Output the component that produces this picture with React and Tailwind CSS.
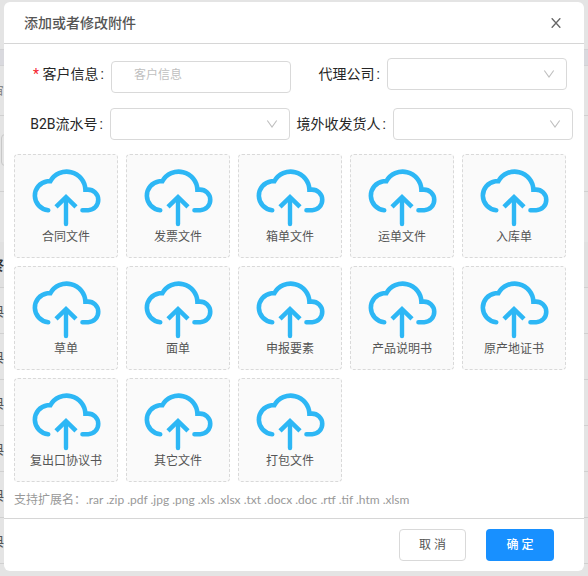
import { useId } from "react";

const files = [
  "合同文件", "发票文件", "箱单文件", "运单文件", "入库单",
  "草单", "面单", "申报要素", "产品说明书", "原产地证书",
  "复出口协议书", "其它文件", "打包文件",
];

const rows = [1, 2, 3, 4, 5, 6];

function CloudUpload() {
  return (
    <svg className="h-[57px] w-[70px] overflow-visible" viewBox="0 0 70 57" fill="none" stroke="#2db7f5" strokeWidth="4.6" aria-hidden="true">
      <path strokeLinecap="round" d="M17.2 41.2A14.6 14.6 0 0 1 16.4 12.2H19.4A18.7 18.7 0 0 1 54.4 20.6H56.7A10.3 10.3 0 0 1 57.2 41.2H51.5" />
      <path strokeWidth="4.4" strokeLinecap="round" d="M35 30V55" />
      <path d="M25 37.8L35 28.2L45 37.8" />
    </svg>
  );
}

function SelectField({ label, labelWidth = "w-24" }) {
  const id = useId();
  return (
    <div className="flex h-8 items-center">
      <label htmlFor={id} className={`${labelWidth} shrink-0 pr-[7px] text-right whitespace-nowrap`}>{label}<span className="ml-0.5">:</span></label>
      <div className="relative w-[180px]">
        <select id={id} defaultValue="" className="block h-8 w-full appearance-none rounded border border-[#d9d9d9] bg-white pr-8 pl-3">
          <option value=""></option>
        </select>
        <svg className="pointer-events-none absolute top-3 right-3 h-2 w-3" viewBox="0 0 12 8" fill="none" stroke="#bfbfbf" strokeWidth="1.1" aria-hidden="true">
          <path d="M1.3 0.5L6 7L10.7 0.5" />
        </svg>
      </div>
    </div>
  );
}

function PageBehind() {
  return (
    <div aria-hidden="true" className="col-start-1 row-start-1 flex flex-col bg-[#e4e4e4] text-sm text-[#555]">
      <div className="h-[49px] shrink-0" />
      <div className="h-[17px] shrink-0 border-y border-[#d2d2d4] bg-[#d9d9de]" />
      <div className="flex h-[50px] shrink-0 items-center border-b border-[#d0d0d0]">
        <span className="flex w-1 justify-end overflow-hidden text-[#888]">审</span>
      </div>
      <div className="flex h-[76px] shrink-0 items-start border-b border-[#d0d0d0] pt-[18px] pl-px">
        <span className="h-8 w-16 rounded border border-[#c8c8c8]" />
      </div>
      <div className="h-[50px] shrink-0" />
      <div className="flex h-[46px] shrink-0 items-center border-b border-[#d0d0d0] bg-[#e0e0e0] font-bold text-[#333]">
        <span className="flex w-1 justify-end overflow-hidden">终</span>
      </div>
      {rows.map((row) => (
        <div key={row} className="flex h-[46px] shrink-0 items-center border-b border-[#d0d0d0]">
          <span className="flex w-1 justify-end overflow-hidden">典</span>
        </div>
      ))}
    </div>
  );
}

export default function App() {
  return (
    <div className="grid min-h-screen grid-cols-1 bg-[#e4e4e4] font-[Roboto,'Noto_Sans_CJK_SC',sans-serif]">
      <PageBehind />
      <div className="z-10 col-start-1 row-start-1 px-1 pt-0.5 pb-[5px]">
        <section role="dialog" aria-labelledby="dialog-title" className="rounded-md bg-white">
          <header className="flex h-[42px] items-center justify-between border-b border-[#d6d6d6] px-5">
            <h2 id="dialog-title" className="text-sm font-medium text-[#555]">添加或者修改附件</h2>
            <button type="button" aria-label="关闭" className="flex size-4 items-center justify-center text-[#666]">
              <svg className="size-[10px]" viewBox="0 0 10 10" fill="none" stroke="currentColor" strokeWidth="1.3" aria-hidden="true">
                <path d="M0.7 0.2L9.3 9.8M9.3 0.2L0.7 9.8" />
              </svg>
            </button>
          </header>

          <div className="px-[10px] pt-[14px]">
            <div className="text-sm text-[#262626]">
              <div className="flex flex-wrap items-start pl-px">
                <div className="flex items-start">
                  <label htmlFor="customer" className="w-24 shrink-0 pr-[7px] text-right leading-8 whitespace-nowrap">
                    <span className="text-[#f5222d]">*</span> 客户信息<span className="ml-0.5">:</span>
                  </label>
                  <div className="pt-[3px]">
                    <input id="customer" type="text" placeholder="客户信息" className="block h-8 w-[180px] rounded border border-[#d9d9d9] px-[22px] pb-1 text-xs placeholder:text-[#bfbfbf]" />
                  </div>
                </div>
                <SelectField label="代理公司" />
              </div>
              <div className="mt-[15px] flex flex-wrap">
                <SelectField label="B2B流水号" />
                <SelectField label="境外收发货人" labelWidth="w-[103px]" />
              </div>
            </div>

            <div className="mt-[14px] flex flex-wrap gap-2">
              {files.map((name) => (
                <button key={name} type="button" className="flex h-[104px] w-[104px] flex-col items-center justify-start rounded border border-dashed border-[#d9d9d9] bg-[#fafafa] pt-[14px] text-xs text-[#555]">
                  <CloudUpload />
                  <span className="block leading-[22px]">{name}</span>
                </button>
              ))}
            </div>

            <p className="mt-2 pb-2 font-[Lato,'Noto_Sans_CJK_SC',sans-serif] text-xs leading-5 text-[#999]">
              支持扩展名：.rar .zip .pdf .jpg .png .xls .xlsx .txt .docx .doc .rtf .tif .htm .xlsm
            </p>
          </div>

          <footer className="flex justify-end gap-5 border-t border-[#d6d6d6] px-[30px] py-[10px] text-xs">
            <button type="button" className="h-8 w-[67px] rounded border border-[#d9d9d9] bg-white text-[#555]">取 消</button>
            <button type="button" className="h-8 w-[68px] rounded bg-[#1890ff] font-medium text-white">确 定</button>
          </footer>
        </section>
      </div>
    </div>
  );
}
